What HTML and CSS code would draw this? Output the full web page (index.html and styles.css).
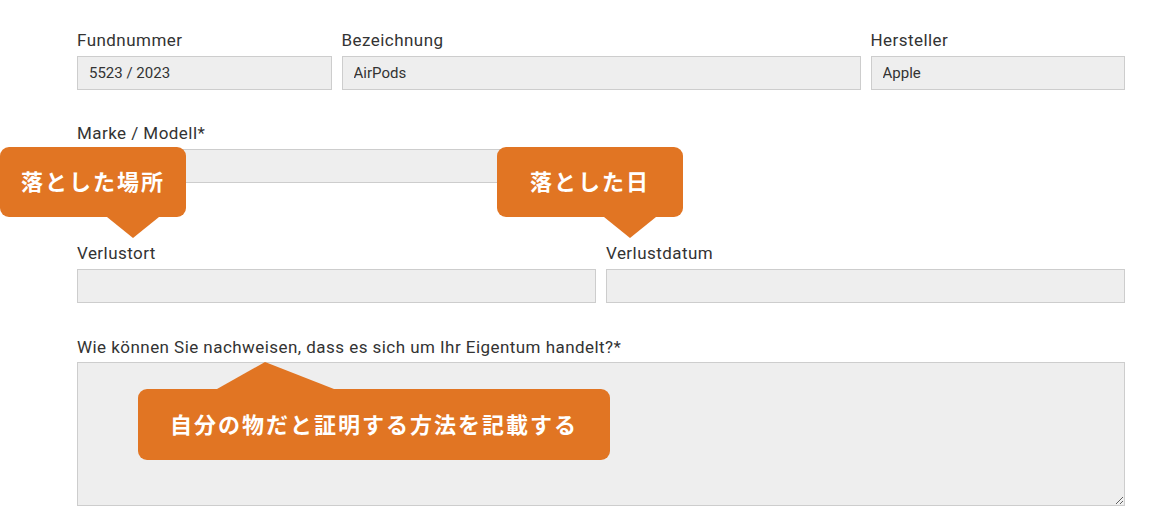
FILE: index.html
```html
<!DOCTYPE html>
<html lang="de">
<head>
    <meta charset="UTF-8">
    <meta name="viewport" content="width=device-width, initial-scale=1.0">
    <title>Verlustmeldung</title>
    <link rel="stylesheet" href="styles.css">
</head>
<body>
    <div class="page">
        <form class="form">
            <div class="row">
                <div class="field col-3">
                    <label>Fundnummer</label>
                    <input type="text" value="5523 / 2023" readonly>
                </div>
                <div class="field col-6">
                    <label>Bezeichnung</label>
                    <input type="text" value="AirPods" readonly>
                </div>
                <div class="field col-3">
                    <label>Hersteller</label>
                    <input type="text" value="Apple" readonly>
                </div>
            </div>

            <div class="row row-wide">
                <div class="field col-6">
                    <label>Marke / Modell*</label>
                    <input type="text">
                </div>
            </div>

            <div class="row row-tall">
                <div class="field col-6">
                    <label>Verlustort</label>
                    <input type="text">
                </div>
                <div class="field col-6">
                    <label>Verlustdatum</label>
                    <input type="text">
                </div>
            </div>

            <div class="row">
                <div class="field field-text col-12">
                    <label>Wie können Sie nachweisen, dass es sich um Ihr Eigentum handelt?*</label>
                    <textarea></textarea>
                </div>
            </div>
        </form>

        <!-- hints laid over the form -->
        <div class="callout callout-down callout-place">落とした場所</div>
        <div class="callout callout-down callout-date">落とした日</div>
        <div class="callout callout-up callout-proof">自分の物だと証明する方法を記載する</div>
    </div>
</body>
</html>
```

FILE: styles.css
```css
body {
    margin: 0;
    font-family: Roboto, "Liberation Sans", sans-serif;
    color: #333;
    background: #fff;
}
.page {
    position: relative;
    height: 518px;
    overflow: hidden;
    padding: 30px 34px 0 77px;
    box-sizing: border-box;
}
.row {
    display: flex;
    margin: 0 -5px 33px;
}
.row-wide {
    margin-bottom: 60px;
}
.row-tall {
    margin-bottom: 34px;
}
.field {
    padding: 0 5px;
    box-sizing: border-box;
}
.col-3 { width: 25%; }
.col-6 { width: 50%; }
.col-12 { width: 100%; }
.field label {
    display: block;
    font-size: 17px;
    letter-spacing: 0.45px;
    line-height: 20px;
    margin-bottom: 6px;
    color: #333;
}
.field-text label {
    margin-bottom: 5px;
}
.field input,
.field textarea {
    display: block;
    width: 100%;
    box-sizing: border-box;
    background: #eee;
    border: 1px solid #cdcdcd;
    border-radius: 0;
    font-family: Roboto, "Liberation Sans", sans-serif;
    font-size: 15px;
    color: #333;
    padding: 0 11px;
    margin: 0;
    outline: none;
}
.field input {
    height: 34px;
}
.field textarea {
    height: 144px;
    resize: vertical;
}
.callout {
    position: absolute;
    background: #e17523;
    color: #fff;
    border-radius: 9px;
    font-family: "Noto Sans CJK JP", sans-serif;
    font-weight: 700;
    font-size: 22px;
    letter-spacing: 2px;
    display: flex;
    align-items: center;
    justify-content: center;
    padding-bottom: 4px;
    box-sizing: border-box;
}
.callout::after {
    content: "";
    position: absolute;
    width: 0;
    height: 0;
}
.callout-down::after {
    left: 107px;
    bottom: -21px;
    border-left: 26px solid transparent;
    border-right: 26px solid transparent;
    border-top: 21px solid #e17523;
}
.callout-up::after {
    left: 79px;
    top: -27px;
    border-left: 48px solid transparent;
    border-right: 69px solid transparent;
    border-bottom: 27px solid #e17523;
}
.callout-place {
    left: 0;
    top: 147px;
    width: 186px;
    height: 70px;
}
.callout-date {
    left: 497px;
    top: 147px;
    width: 186px;
    height: 70px;
}
.callout-proof {
    left: 138px;
    top: 389px;
    width: 472px;
    height: 71px;
}
```
